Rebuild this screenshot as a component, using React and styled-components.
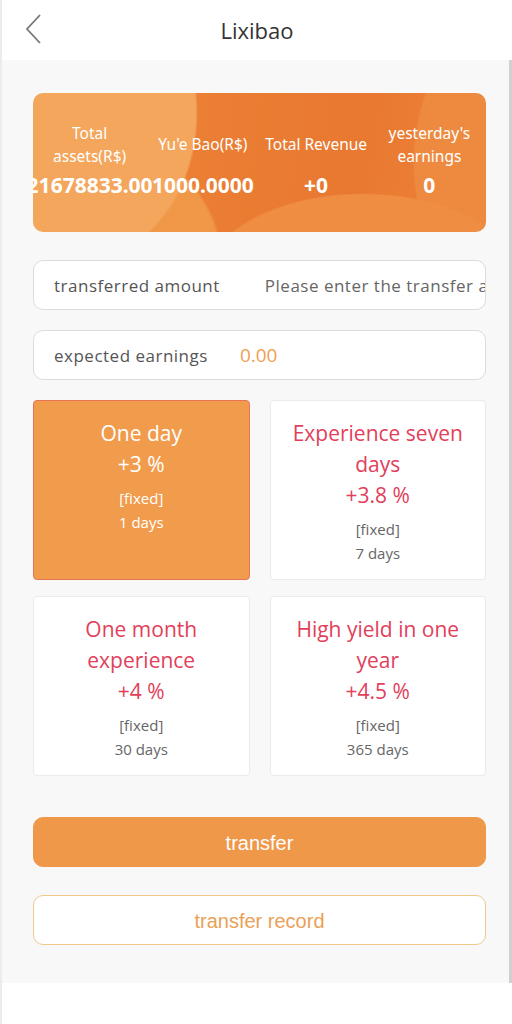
import React from 'react'
import styled, { createGlobalStyle } from 'styled-components'

const GlobalStyle = createGlobalStyle`
	* { box-sizing: border-box; }
	body {
		margin: 0;
		background: #fff;
		font-family: "Open Sans", "Noto Sans", sans-serif;
	}
`

const Page = styled.div`
	width: 512px;
	min-height: 1024px;
	border-left: 2px solid #ececec;
	background: #fff;
`

const Header = styled.header`
	height: 60px;
	display: flex;
	align-items: center;
	justify-content: center;
	position: relative;
	background: #fff;
	font-size: 22px;
	color: #333;
`

const Back = styled.button`
	position: absolute;
	left: 20px;
	top: 13px;
	width: 24px;
	height: 32px;
	padding: 0;
	border: none;
	background: none;
`

const Main = styled.main`
	min-height: 923px;
	padding: 33px 23px 30px 31px;
	background: #f8f8f8;
	border-right: 3px solid #d0d0d0;
	display: flex;
	flex-direction: column;
`

const Summary = styled.section`
	height: 139px;
	border-radius: 10px;
	overflow: hidden;
	display: flex;
	align-items: center;
	padding-bottom: 5px;
	color: #fff;
	background:
		radial-gradient(ellipse 120px 150px at 45px 20px, #f3a65c 0 98%, transparent 100%),
		radial-gradient(ellipse 170px 140px at 20px 170px, #f09748 0 98%, transparent 100%),
		radial-gradient(ellipse 160px 90px at 330px 190px, #ef8d42 0 98%, transparent 100%),
		radial-gradient(ellipse 90px 140px at 470px 70px, #ee8a40 0 98%, transparent 100%),
		linear-gradient(100deg, #f09a4c 0%, #eb7f34 35%, #e97830 70%, #ec8538 100%);
`

const Stat = styled.div`
	flex: 1;
	min-width: 0;
	display: flex;
	flex-direction: column;
	align-items: center;
	text-align: center;
	padding: 0 6px;
	font-family: "Noto Sans", sans-serif;
`

const StatLabel = styled.div`
	height: 46px;
	display: flex;
	align-items: center;
	font-size: 15.5px;
	line-height: 23px;
	white-space: ${p => (p.$nowrap ? 'nowrap' : 'normal')};
`

const StatValue = styled.div`
	margin-top: 3px;
	font-size: 21px;
	font-weight: 700;
	line-height: 28px;
	white-space: nowrap;
`

const Field = styled.div`
	height: 50px;
	margin-top: ${p => p.$gap}px;
	display: flex;
	align-items: center;
	gap: ${p => p.$inner}px;
	padding-left: 20px;
	overflow: hidden;
	background: #fff;
	border: 1px solid #dcdcdc;
	border-radius: 10px;
	font-size: 17px;
	letter-spacing: 0.5px;
	color: #555;
	white-space: nowrap;
`

const FieldInput = styled.input`
	flex: 1;
	min-width: 0;
	border: none;
	outline: none;
	padding: 0;
	font: inherit;
	letter-spacing: inherit;
	color: #555;
	background: transparent;
	&::placeholder { color: #666; }
`

const Earned = styled.span`
	color: #eea052;
	font-size: 19px;
	letter-spacing: 0;
`

const Plans = styled.div`
	margin-top: 20px;
	display: grid;
	grid-template-columns: 1fr 1fr;
	column-gap: 20px;
	row-gap: 16px;
`

const Plan = styled.div`
	height: 180px;
	padding: 17px 8px 0;
	text-align: center;
	border-radius: 4px;
	border: 1px solid ${p => (p.$active ? '#e9735a' : '#ebebeb')};
	background: ${p => (p.$active ? '#f19b4c' : '#fff')};
	color: ${p => (p.$active ? '#fff' : '#e2405a')};
`

const PlanTitle = styled.div`
	font-size: 21px;
	line-height: 31px;
`

const PlanMeta = styled.div`
	margin-top: 6px;
	font-size: 15px;
	line-height: 24px;
	color: ${p => (p.$active ? '#fff' : '#666')};
`

const Button = styled.button`
	height: 50px;
	margin-top: ${p => p.$gap}px;
	padding-top: 3px;
	border-radius: 10px;
	font-family: "Liberation Sans", Arial, sans-serif;
	font-size: 20px;
	border: 1px solid ${p => (p.$outline ? '#f0c88e' : '#f0984a')};
	background: ${p => (p.$outline ? '#fff' : '#f0984a')};
	color: ${p => (p.$outline ? '#eba057' : '#fff')};
`

const plans = [
	{ name: 'One day', rate: '3', days: 1, active: true },
	{ name: 'Experience seven days', rate: '3.8', days: 7 },
	{ name: 'One month experience', rate: '4', days: 30 },
	{ name: 'High yield in one year', rate: '4.5', days: 365 },
]

const stats = [
	{ label: 'Total assets(R$)', value: '21678833.00' },
	{ label: "Yu'e Bao(R$)", value: '1000.0000', nowrap: true },
	{ label: 'Total Revenue', value: '+0', nowrap: true },
	{ label: "yesterday's earnings", value: '0' },
]

export default function App() {
	return (
		<Page>
			<GlobalStyle />
			<Header>
				<Back aria-label="back">
					<svg width="24" height="32" viewBox="0 0 24 32" fill="none">
						<path d="M18 2 L5 16 L18 30" stroke="#777" strokeWidth="1.8" />
					</svg>
				</Back>
				Lixibao
			</Header>
			<Main>
				<Summary>
					{stats.map(s => (
						<Stat key={s.label}>
							<StatLabel $nowrap={s.nowrap}>{s.label}</StatLabel>
							<StatValue>{s.value}</StatValue>
						</Stat>
					))}
				</Summary>

				<Field $gap={28} $inner={45}>
					transferred amount
					<FieldInput placeholder="Please enter the transfer amount" />
				</Field>
				<Field $gap={20} $inner={32}>
					expected earnings
					<Earned>0.00</Earned>
				</Field>

				<Plans>
					{plans.map(p => (
						<Plan key={p.name} $active={p.active}>
							<PlanTitle>{p.name}</PlanTitle>
							<PlanTitle>+{p.rate} %</PlanTitle>
							<PlanMeta $active={p.active}>
								[fixed]<br />
								{p.days} days
							</PlanMeta>
						</Plan>
					))}
				</Plans>

				<Button $gap={41}>transfer</Button>
				<Button $gap={28} $outline>transfer record</Button>
			</Main>
		</Page>
	)
}
